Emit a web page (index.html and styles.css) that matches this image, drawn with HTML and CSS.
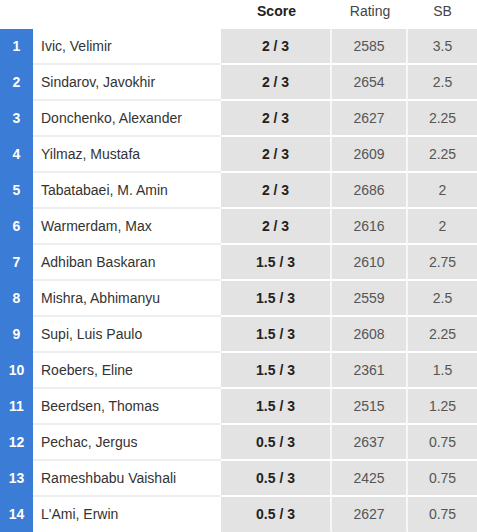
FILE: index.html
```html
<!DOCTYPE html>
<html>
<head>
<meta charset="utf-8">
<link rel="stylesheet" href="styles.css">
</head>
<body>
<div class="standings">
  <div class="row head">
    <div class="c rank"></div>
    <div class="c name"></div>
    <div class="c score">Score</div>
    <div class="c rating">Rating</div>
    <div class="c sb">SB</div>
  </div>
  <div class="row"><div class="c rank">1</div><div class="c name">Ivic, Velimir</div><div class="c score">2 / 3</div><div class="c rating">2585</div><div class="c sb">3.5</div></div>
  <div class="row"><div class="c rank">2</div><div class="c name">Sindarov, Javokhir</div><div class="c score">2 / 3</div><div class="c rating">2654</div><div class="c sb">2.5</div></div>
  <div class="row"><div class="c rank">3</div><div class="c name">Donchenko, Alexander</div><div class="c score">2 / 3</div><div class="c rating">2627</div><div class="c sb">2.25</div></div>
  <div class="row"><div class="c rank">4</div><div class="c name">Yilmaz, Mustafa</div><div class="c score">2 / 3</div><div class="c rating">2609</div><div class="c sb">2.25</div></div>
  <div class="row"><div class="c rank">5</div><div class="c name">Tabatabaei, M. Amin</div><div class="c score">2 / 3</div><div class="c rating">2686</div><div class="c sb">2</div></div>
  <div class="row"><div class="c rank">6</div><div class="c name">Warmerdam, Max</div><div class="c score">2 / 3</div><div class="c rating">2616</div><div class="c sb">2</div></div>
  <div class="row"><div class="c rank">7</div><div class="c name">Adhiban Baskaran</div><div class="c score">1.5 / 3</div><div class="c rating">2610</div><div class="c sb">2.75</div></div>
  <div class="row"><div class="c rank">8</div><div class="c name">Mishra, Abhimanyu</div><div class="c score">1.5 / 3</div><div class="c rating">2559</div><div class="c sb">2.5</div></div>
  <div class="row"><div class="c rank">9</div><div class="c name">Supi, Luis Paulo</div><div class="c score">1.5 / 3</div><div class="c rating">2608</div><div class="c sb">2.25</div></div>
  <div class="row"><div class="c rank">10</div><div class="c name">Roebers, Eline</div><div class="c score">1.5 / 3</div><div class="c rating">2361</div><div class="c sb">1.5</div></div>
  <div class="row"><div class="c rank">11</div><div class="c name">Beerdsen, Thomas</div><div class="c score">1.5 / 3</div><div class="c rating">2515</div><div class="c sb">1.25</div></div>
  <div class="row"><div class="c rank">12</div><div class="c name">Pechac, Jergus</div><div class="c score">0.5 / 3</div><div class="c rating">2637</div><div class="c sb">0.75</div></div>
  <div class="row"><div class="c rank">13</div><div class="c name">Rameshbabu Vaishali</div><div class="c score">0.5 / 3</div><div class="c rating">2425</div><div class="c sb">0.75</div></div>
  <div class="row"><div class="c rank">14</div><div class="c name">L'Ami, Erwin</div><div class="c score">0.5 / 3</div><div class="c rating">2627</div><div class="c sb">0.75</div></div>
</div>
</body>
</html>
```

FILE: styles.css
```css
html, body {
  margin: 0;
  padding: 0;
  background: #ffffff;
}
body {
  font-family: "Liberation Sans", Arial, sans-serif;
  font-size: 14px;
  color: #333333;
}
.standings {
  width: 477px;
  display: flex;
  flex-direction: column;
}
.row {
  display: grid;
  grid-template-columns: 33px 188px 111px 76px 69px;
  height: 36px;
}
.row.head {
  height: 29px;
}
.c {
  display: flex;
  align-items: center;
  justify-content: center;
  box-sizing: border-box;
  height: 36px;
  border-bottom: 2px solid #ffffff;
}
.head .c {
  height: 29px;
  border: 0;
  padding-bottom: 8px;
  background: #ffffff;
  color: #444444;
}
.head .score {
  font-weight: bold;
  color: #222222;
}
.rank {
  background: #3a7cd6;
  color: #ffffff;
  font-weight: bold;
  border-bottom: 2px solid #3a7cd6;
  background-image: linear-gradient(#80aae6, #80aae6);
  background-repeat: no-repeat;
  background-size: 28px 2px;
  background-position: 0 100%;
  background-origin: border-box;
}
.row:last-child .rank {
  background-image: none;
}
.name {
  justify-content: flex-start;
  padding-left: 8px;
  background: #ffffff;
  border-bottom-color: #eeeeee;
  color: #333333;
}
.score {
  background: #e3e3e3;
  font-weight: bold;
  color: #222222;
  border-right: 2px solid #f7f7f7;
}
.rating {
  background: #e3e3e3;
  color: #555555;
  border-right: 2px solid #f7f7f7;
}
.sb {
  background: #e3e3e3;
  color: #555555;
}
.row:last-child .c {
  border-bottom-color: transparent;
}
```
